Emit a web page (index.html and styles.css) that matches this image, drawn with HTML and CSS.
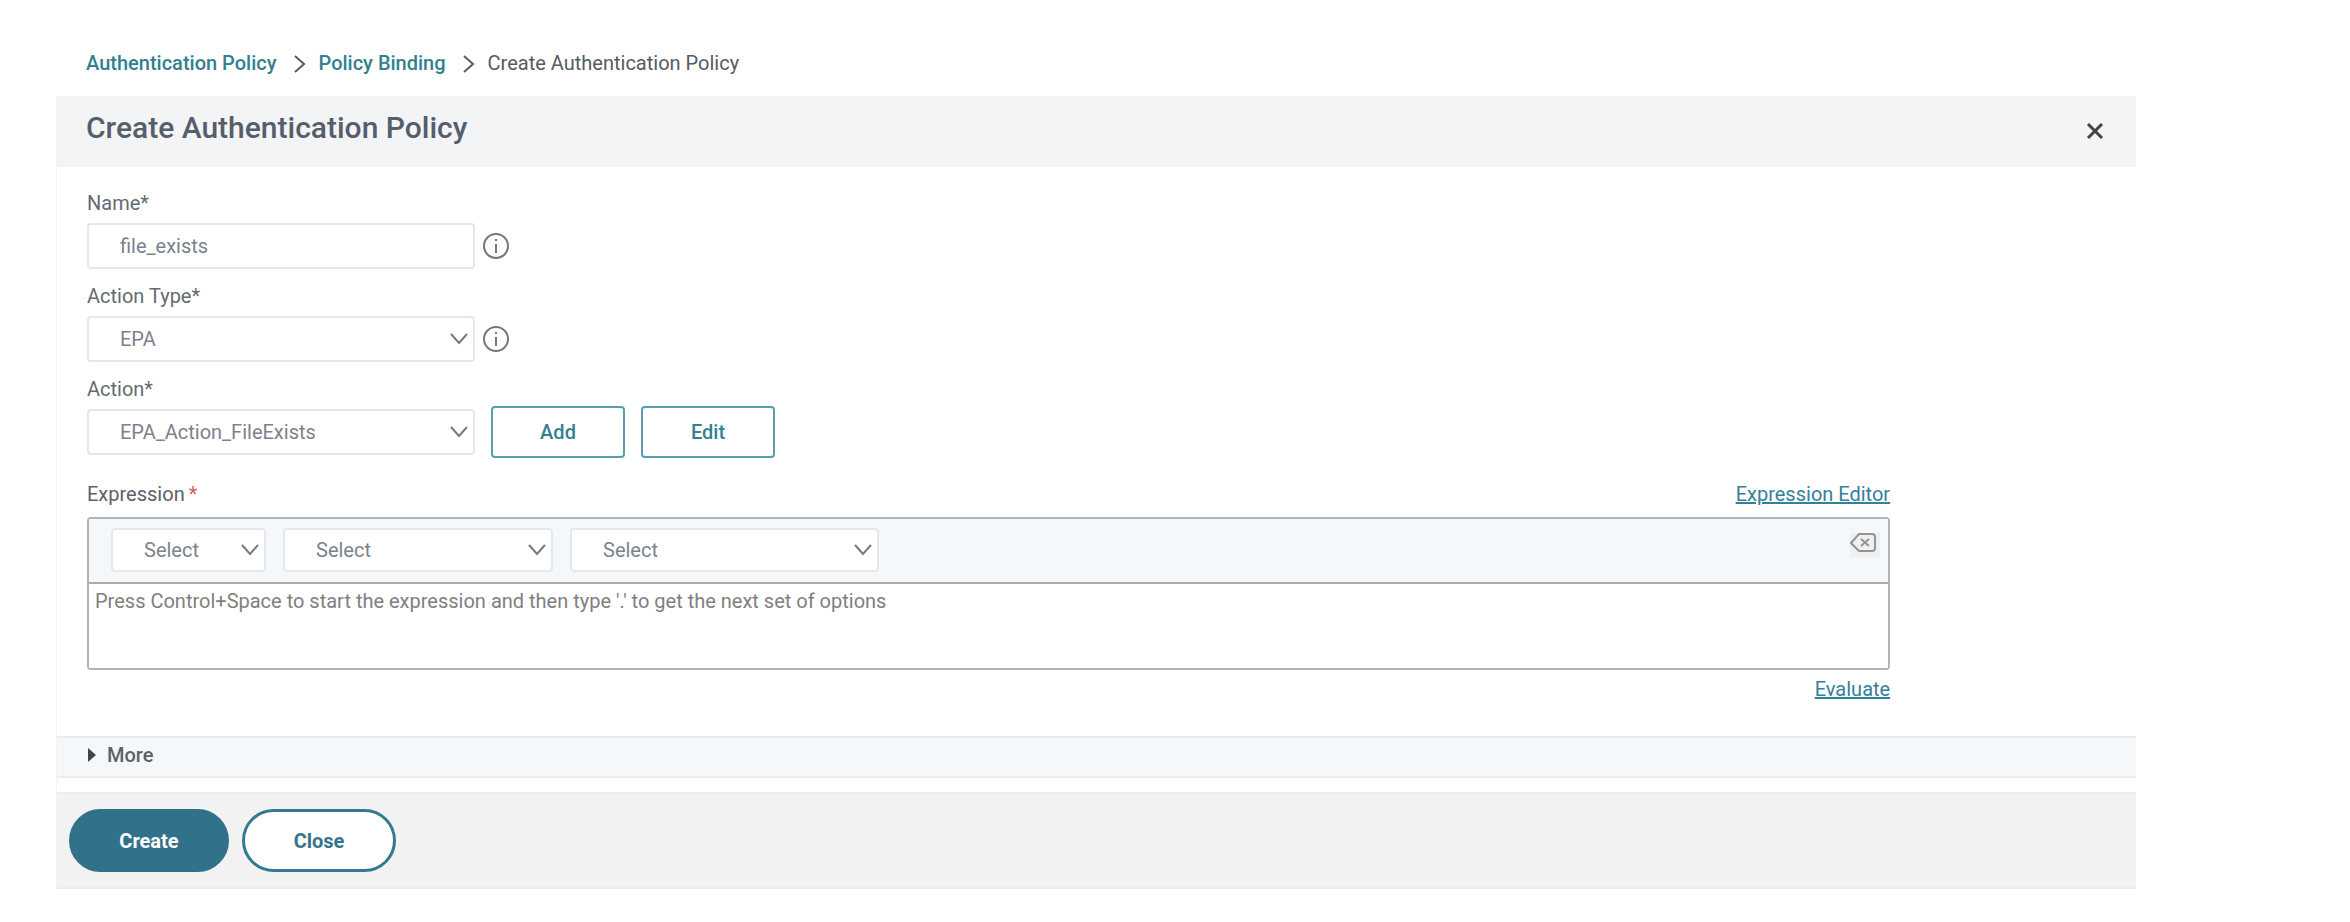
FILE: index.html
```html
<!DOCTYPE html>
<html lang="en">
<head>
<meta charset="utf-8">
<title>Create Authentication Policy</title>
<link rel="stylesheet" href="styles.css">
</head>
<body>
<div class="page">
  <nav class="breadcrumb" aria-label="Breadcrumb">
    <a href="#">Authentication Policy</a>
    <svg class="crumb-sep" viewBox="0 0 12 20" aria-hidden="true"><path d="M1 2l9 8-9 8"/></svg>
    <a href="#">Policy Binding</a>
    <svg class="crumb-sep" viewBox="0 0 12 20" aria-hidden="true"><path d="M1 2l9 8-9 8"/></svg>
    <span>Create Authentication Policy</span>
  </nav>

  <main class="panel">
    <header class="panel-header">
      <h1>Create Authentication Policy</h1>
      <button class="close-icon" type="button" aria-label="Close dialog">
        <svg viewBox="0 0 18 18" aria-hidden="true"><path d="M2 2l14 14M16 2L2 16"/></svg>
      </button>
    </header>

    <form class="form">
      <div class="field">
        <label for="name">Name*</label>
        <div class="row">
          <input class="control" id="name" type="text" value="file_exists">
          <svg class="info" viewBox="0 0 28 28" aria-hidden="true"><circle cx="14" cy="14" r="12"/><path d="M14 12v9M14 7v2"/></svg>
        </div>
      </div>
      <div class="field">
        <label for="type">Action Type*</label>
        <div class="row">
          <div class="select">
            <select class="control" id="type"><option>EPA</option></select>
            <svg class="chevron" viewBox="0 0 20 12" aria-hidden="true"><path d="M2 1l8 9 8-9"/></svg>
          </div>
          <svg class="info" viewBox="0 0 28 28" aria-hidden="true"><circle cx="14" cy="14" r="12"/><path d="M14 12v9M14 7v2"/></svg>
        </div>
      </div>
      <div class="field">
        <label for="action">Action*</label>
        <div class="row actions">
          <div class="select">
            <select class="control" id="action"><option>EPA_Action_FileExists</option></select>
            <svg class="chevron" viewBox="0 0 20 12" aria-hidden="true"><path d="M2 1l8 9 8-9"/></svg>
          </div>
          <button class="outline" type="button">Add</button>
          <button class="outline" type="button">Edit</button>
        </div>
      </div>

      <div class="expression">
        <div class="expression-head">
          <label for="expr">Expression<span class="required">*</span></label>
          <a href="#">Expression Editor</a>
        </div>
        <div class="editor">
          <div class="toolbar">
            <div class="select small">
              <select class="control" aria-label="Expression prefix"><option>Select</option></select>
              <svg class="chevron" viewBox="0 0 20 12" aria-hidden="true"><path d="M2 1l8 9 8-9"/></svg>
            </div>
            <div class="select medium">
              <select class="control" aria-label="Saved expression"><option>Select</option></select>
              <svg class="chevron" viewBox="0 0 20 12" aria-hidden="true"><path d="M2 1l8 9 8-9"/></svg>
            </div>
            <div class="select large">
              <select class="control" aria-label="Expression option"><option>Select</option></select>
              <svg class="chevron" viewBox="0 0 20 12" aria-hidden="true"><path d="M2 1l8 9 8-9"/></svg>
            </div>
            <button class="clear" type="button" aria-label="Clear expression">
              <svg viewBox="0 0 26 20" aria-hidden="true"><path d="M9 1h13q3 0 3 3v11q0 3-3 3H9L1 10zM11 6l8 7M19 6l-8 7"/></svg>
            </button>
          </div>
          <textarea id="expr" placeholder="Press Control+Space to start the expression and then type '.' to get the next set of options"></textarea>
        </div>
        <a class="evaluate" href="#">Evaluate</a>
      </div>

      <button class="more" type="button">
        <svg viewBox="0 0 8 14" aria-hidden="true"><path d="M0 0l8 7-8 7z"/></svg>
        More
      </button>

      <footer class="footer">
        <button class="pill primary" type="submit">Create</button>
        <button class="pill" type="button">Close</button>
      </footer>
    </form>
  </main>
</div>
</body>
</html>
```

FILE: styles.css
```css
* { box-sizing: border-box; }

body {
  margin: 0;
  background: #fff;
  color: #666a70;
  font-family: Roboto, "Liberation Sans", sans-serif;
  font-size: 20px;
  line-height: 24px;
}

button, input, select, textarea { font: inherit; }
svg { fill: none; stroke: currentColor; flex: none; }
a { color: #34809a; }

.page { padding: 51px 9.1% 32px 56px; }

.breadcrumb {
  display: flex;
  align-items: center;
  padding: 0 30px 21px;
  color: #555b64;
}
.breadcrumb a { color: #34808f; font-weight: 500; text-decoration: none; }
.crumb-sep { width: 12px; height: 20px; margin: 2px 13px 0 17px; stroke-width: 2; }

.panel-header {
  display: flex;
  align-items: center;
  justify-content: space-between;
  height: 71px;
  padding: 0 32px 8px 30px;
  background: #f3f4f6;
}
.panel-header h1 {
  margin: 0;
  color: #555e6b;
  font-size: 30px;
  line-height: 36px;
  font-weight: 500;
}
.close-icon {
  display: flex;
  margin-top: 6px;
  padding: 0;
  border: 0;
  background: none;
  color: #444;
}
.close-icon svg { width: 18px; height: 18px; stroke-width: 3; }

.form { border-left: 1px solid #f3f3f5; }

.field { padding: 0 30px; }
.field:first-child { padding-top: 24px; }
.field > label { display: block; padding-bottom: 8px; }
.row { display: flex; align-items: center; gap: 7px; min-height: 46px; margin-bottom: 15px; }
.row.actions { gap: 16px; min-height: 52px; margin-top: -3px; margin-bottom: 24px; }

.control {
  width: 388px;
  height: 46px;
  padding: 0 31px;
  border: 2px solid #e6e7ea;
  border-radius: 4px;
  background: #fff;
  color: #7c828d;
  appearance: none;
}
.select { display: grid; align-items: center; }
.select > * { grid-area: 1 / 1; }
.chevron {
  width: 20px;
  height: 12px;
  justify-self: end;
  margin-right: 6px;
  color: #747a83;
  stroke-width: 2;
  pointer-events: none;
}
.info { width: 28px; height: 28px; color: #777; stroke-width: 2; }

.outline {
  width: 134px;
  height: 52px;
  border: 2px solid #5c9caf;
  border-radius: 4px;
  background: #fff;
  color: #34808f;
  font-weight: 500;
}

.expression { display: flex; flex-direction: column; padding: 0 246px 35px 30px; }
.expression-head { display: flex; justify-content: space-between; padding-bottom: 11px; }
.expression-head label { color: #5d6168; }
.required { margin-left: 4px; color: #d9604c; }

.editor { border: 2px solid #b2b3b4; border-radius: 4px; }
.toolbar {
  display: flex;
  align-items: flex-start;
  gap: 17px;
  padding: 9px 8px 10px 22px;
  border-bottom: 2px solid #acadae;
  background: #f5f8fb;
}
.toolbar .control { width: 100%; height: 44px; }
.small { width: 155px; }
.medium { width: 270px; }
.large { width: 309px; }
.clear {
  display: flex;
  width: 30px;
  height: 24px;
  margin: 5px 0 0 auto;
  padding: 0;
  border: 0;
  background: #f0f0f0;
  color: #949494;
}
.clear svg { width: 26px; height: 20px; stroke-width: 2; }
.editor textarea {
  display: block;
  width: 100%;
  height: 84px;
  padding: 5px 6px;
  border: 0;
  background: #fff;
  color: #757575;
  resize: none;
}
.editor textarea::placeholder { color: #808080; }
.evaluate { align-self: flex-end; margin-top: 7px; }

.more {
  display: flex;
  align-items: center;
  gap: 11px;
  width: 100%;
  height: 42px;
  padding: 0 31px 4px;
  border: 0 solid #e9ebed;
  border-width: 2px 0;
  background: #f5f8fa;
  color: #5d6168;
  font-weight: 500;
}
.more svg { width: 8px; height: 14px; fill: #444; stroke: none; }

.footer {
  display: flex;
  gap: 13px;
  height: 97px;
  margin-top: 14px;
  padding: 15px 12px;
  border: 0 solid #ebedef;
  border-width: 2px 0;
  background: #f2f2f2;
}
.pill {
  width: 154px;
  height: 63px;
  border: 3px solid #327a91;
  border-radius: 32px;
  background: #fff;
  color: #34768c;
  font-weight: 700;
}
.pill.primary { width: 160px; background: #317189; border-color: #317189; color: #fff; }
```
